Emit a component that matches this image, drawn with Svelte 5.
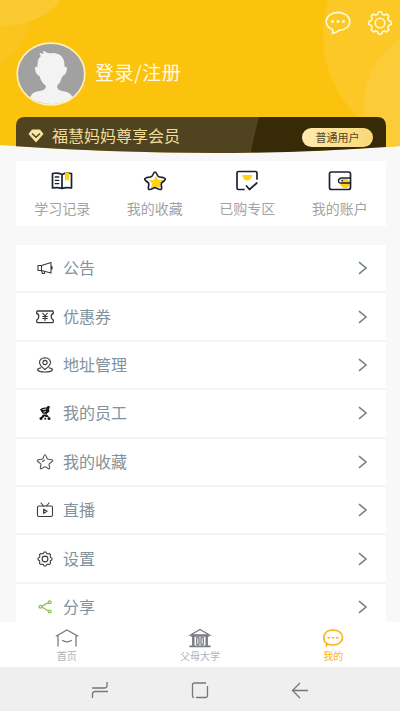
<script>
const shortcuts = [
  {icon: 'book', label: '学习记录'},
  {icon: 'favorite', label: '我的收藏'},
  {icon: 'bought', label: '已购专区'},
  {icon: 'wallet', label: '我的账户'},
]

const menu = [
  {icon: 'notice', label: '公告'},
  {icon: 'coupon', label: '优惠券'},
  {icon: 'address', label: '地址管理'},
  {icon: 'staff', label: '我的员工'},
  {icon: 'star', label: '我的收藏'},
  {icon: 'live', label: '直播'},
  {icon: 'settings', label: '设置'},
  {icon: 'share', label: '分享'},
]

const tabs = [
  {icon: 'home', label: '首页'},
  {icon: 'college', label: '父母大学'},
  {icon: 'mine', label: '我的'},
]

let active = $state('mine');

// wavy outline shared by the two gears
function gear(cx, cy, r, amp) {
  let d = '';
  for (let i = 0; i < 96; i++) {
    const a = (i / 96) * Math.PI * 2;
    const w = Math.max(-1, Math.min(1, Math.cos(a * 8) * 1.8));
    const rr = r + amp * w;
    d += `${i ? 'L' : 'M'}${(cx + rr * Math.cos(a)).toFixed(2)} ${(cy + rr * Math.sin(a)).toFixed(2)}`;
  }
  return d + 'Z';
}
</script>

<div class="app">
  <header>
    <svg class="backdrop" viewBox="0 0 400 160">
      <path fill="#fbc30e" d="M0 0H400V146Q200 160 0 145Z"/>
      <path fill="#fbc51f" d="M0 0H33Q32 45 0 65Z"/>
      <path fill="#fbca30" d="M0 0H61Q42 25 0 26Z"/>
      <path fill="#fbc826" d="M328 0Q310 68 359 119L386 146.800L400 146V0Z"/>
      <path fill="#fbcc38" d="M400 38Q360 66 364 119L386 146.800L400 146Z"/>
      <path fill="#50431f" d="M16 146.200V126Q16 117 25 117H260L250 152.700Q130 154 16 146.200Z"/>
      <path fill="#372a06" d="M259 117H377Q386 117 386 126V146.900Q320 151.500 250 152.700Z"/>
    </svg>
    <div class="actions">
      <svg class="chat" viewBox="0 0 26 24" fill="none" stroke="#fff9d8" stroke-width="1.600">
        <path d="M7.500 18.500C3.500 17 1.200 14 1.200 10.500C1.200 5.500 6.200 1.400 13 1.400S24.800 5.500 24.800 10.500S20 19.200 14 19.400Q11 22 7.500 22.500Q8.500 20.500 7.500 18.500Z"/>
        <path d="M6.200 10.500h2.800M11.600 10.500h2.800M17 10.500h2.800" stroke-width="2.700"/>
      </svg>
      <svg class="gear" viewBox="0 0 26 24" fill="none" stroke="#fff9d8" stroke-width="1.600">
        <path d={gear(13, 12, 10.1, 1.1)}/>
        <circle cx="13" cy="12" r="4.800"/>
      </svg>
    </div>
    <div class="user">
      <svg class="avatar" viewBox="0 0 70 64">
        <ellipse cx="35" cy="32" rx="33.800" ry="30.800" fill="#a1a1a2"/>
        <path fill="#f3f3f4" d="M14 56Q15 50 24 49Q30 48 30 44Q25 40 23.500 34Q19 32 19 26Q19 24 21.500 25Q21 17 25 14Q23 12 24 11L28 12Q26 9 28 9Q31 12 38 11Q49 12 48.500 25Q51 24 51 27Q50 33 46.500 34Q45 40 41 44Q41 48 46 49Q55 50 57 56Q36 68 14 56Z"/>
        <ellipse cx="35" cy="32" rx="33.800" ry="30.800" fill="none" stroke="#fff0b5" stroke-width="1.700"/>
      </svg>
      <span>登录/注册</span>
    </div>
    <div class="vip">
      <svg class="gem" viewBox="0 0 16 14">
        <path fill="#f8e4a4" d="M4 .5H12L15.500 5L8 13.500L.5 5Z"/>
        <path fill="none" stroke="#50431f" stroke-width="1.400" d="M4 4.500L8 8.300L12 4.500"/>
      </svg>
      <span class="title">福慧妈妈尊享会员</span>
      <span class="level">普通用户</span>
    </div>
  </header>

  <main>
    <section class="shortcuts">
      {#each shortcuts as item}
      <div class="shortcut">
        <svg viewBox="0 0 24 22" fill="none" stroke="#1c2032" stroke-width="1.700" stroke-linejoin="round" stroke-linecap="round">
          {#if item.icon === 'book'}
          <path d="M12 4.500Q8 2.500 2.500 3.500V18Q8 17 12 18.500Q16 17 21.500 18V3.500Q16 2.500 12 4.500V18.500"/>
          <path stroke-width="1.300" d="M5.200 7h3.600M5.200 10.300h3.600M5.200 13.600h3.600"/>
          <path fill="#fcd316" stroke="none" d="M15 2.500H19V11L17 9.500L15 11Z"/>
          {:else if item.icon === 'favorite'}
          <path fill="#fcd316" stroke="none" d="M13 6L15 9.500L20 10L17 13.500L17.500 18L13 16.500L8 18L9 13.500L6 10.500L11 9.700Z"/>
          <path d="M12 2Q13 2 14 4.500Q15 6.800 16.500 7L20.500 7.700Q23.500 8.500 21.500 10.500L18.500 13Q17.800 14 18.500 16.500Q19.500 20.500 16 19.200L12 17.500L8 19.200Q4.500 20.500 5.500 16.500Q6.200 14 5.500 13L2.500 10.500Q.5 8.500 3.500 7.700L7.500 7Q9 6.800 10 4.500Q11 2 12 2Z"/>
          {:else if item.icon === 'bought'}
          <path fill="#fcd316" stroke="none" d="M7 5H17.500Q16 10.500 12.300 10.500T7 5Z"/>
          <path d="M22 9V3Q22 1.500 20.500 1.500H3.500Q2 1.500 2 3V18Q2 19.500 3.500 19.500H9M11.500 16L14.500 19.500L21.800 13"/>
          {:else}
          <circle cx="17" cy="13.500" r="4.700" fill="#fcd316" stroke="none"/>
          <rect x="1.500" y="2" width="21" height="17.500" rx="2"/>
          <path stroke-width="1.400" d="M22.500 8H13.500Q10.500 8.500 10.500 11T13.500 13H22.500M14 10.500H14.500"/>
          {/if}
        </svg>
        <span>{item.label}</span>
      </div>
      {/each}
    </section>

    <section class="menu">
      {#each menu as item}
      <div class="row">
        <svg class="icon" viewBox="0 0 18 16" fill="none" stroke="#3a3a3a" stroke-width="1.100" stroke-linejoin="round" stroke-linecap="round">
          {#if item.icon === 'notice'}
          <path d="M2 5.500H5.500V10.500H2ZM5.500 5.500L15 2.500V13L5.500 10.500M5.500 11L6.500 13.500H8.500V11.500M16 6.500V9"/>
          {:else if item.icon === 'coupon'}
          <path stroke-width="1.300" d="M1.500 2H16.500Q17.500 2 17.300 4.500Q15.200 5 15.200 7.500T17.300 11Q17.500 13.700 16.500 13.700H1.500Q.5 13.700 .7 11Q2.800 10 2.800 7.500T.7 4.500Q.5 2 1.500 2Z"/>
          <path d="M6.800 4.300L9 7L11.200 4.300M9 7V11.500M6.700 7.500H11.300M6.700 9.500H11.300"/>
          {:else if item.icon === 'address'}
          <path d="M9 12.500Q3.500 8.500 3.500 5.300Q3.800 1 9 .7Q14.200 1 14.500 5.300Q14.500 8.500 9 12.500Z"/>
          <circle cx="9" cy="5.500" r="2.100"/>
          <path d="M5 10.700Q1.500 11.500 1.500 12.700Q2.500 15 9 15T16.500 12.700Q16.500 11.500 13 10.700"/>
          {:else if item.icon === 'staff'}
          <g fill="#171717" stroke="none">
            <path d="M4 4.500Q6 2 10.500 2.500L12 .8L14 1.500L13 4.500L13.500 6.500L10.500 9L6.500 8.500Z"/>
            <path d="M7 9.500H11L13 12H10L8.500 11.300L7 13H4.500Z"/>
            <circle cx="5" cy="13.500" r="1.500"/>
            <circle cx="9.200" cy="13.800" r="1"/>
            <circle cx="13" cy="13.500" r="1.500"/>
          </g>
          <path stroke="#ddd" stroke-width="1" d="M7 4.600L10 4M8 7L9.500 6.500"/>
          {:else if item.icon === 'star'}
          <path stroke="#555" d="M9 .8Q9.800 .8 11.300 5L16 5.800Q17.500 6.200 16 7.500L13 10.200L13.700 14Q13.600 15.400 12.200 14.500L9 12.600L5.800 14.500Q4.400 15.400 4.300 14L5 10.200L2 7.500Q.5 6.200 2 5.800L6.700 5Q8.200 .8 9 .8ZM6.500 7.500L8.500 6.200"/>
          {:else if item.icon === 'live'}
          <rect x="1.500" y="4" width="15" height="10.500" rx="1.500"/>
          <path d="M5 1L7.500 4M13 1L10.500 4"/>
          <path stroke-width="1.300" d="M7.700 7.300L11 9.300L7.700 11.300Z"/>
          {:else if item.icon === 'settings'}
          <path d={gear(9, 8, 6.4, 0.6)}/>
          <circle cx="9" cy="8" r="2.900"/>
          {:else}
          <g stroke="#8dc153" stroke-width="1.300">
            <path d="M12.500 3.700L5 7.500L12.500 12"/>
            <circle cx="4.500" cy="7.700" r="1.400" fill="#fff"/>
            <circle cx="13.700" cy="3.200" r="1.400" fill="#fff"/>
            <circle cx="13.700" cy="12.500" r="1.400" fill="#fff"/>
          </g>
          {/if}
        </svg>
        <span>{item.label}</span>
        <svg class="arrow" viewBox="0 0 10 14" fill="none" stroke="#71828c" stroke-width="1.600">
          <path d="M1 1.200L8 7L1 12.800"/>
        </svg>
      </div>
      {/each}
    </section>
  </main>

  <nav class="tabs">
    {#each tabs as tab}
    <button class="tab" class:active={tab.icon === active} onclick={() => active = tab.icon}>
      <svg viewBox="0 0 24 20" fill="none" stroke="currentColor" stroke-width="1.300">
        {#if tab.icon === 'home'}
        <path d="M.8 8.300L12 2L23.200 8.300M3 7V18.500M21 7V18.500M7.200 12.300Q12 15.500 16.800 12.300"/>
        {:else if tab.icon === 'college'}
        <path d="M2.500 7L12 1.500L21.500 7Z"/>
        <path stroke-width="1.700" d="M3 8H21M1.500 18.300H22.500"/>
        <path stroke-width="2.400" d="M5.300 8V18M18.700 8V18"/>
        <rect x="8.700" y="9.300" width="2.300" height="7.500" rx="1"/>
        <rect x="13" y="9.300" width="2.300" height="7.500" rx="1"/>
        {:else}
        <path stroke-width="1.600" d="M4.500 14.500C1 10 3 2 12 2C17.500 2 21.500 5 21.500 9.500S17.500 17 12 17Q8 17 6.500 16L5.500 17.500V14"/>
        <path stroke-width="1.500" d="M6.500 9.800h2.500M10.700 9.800h2.500M15 9.800h2.500"/>
        {/if}
      </svg>
      <span>{tab.label}</span>
    </button>
    {/each}
  </nav>

  <footer>
    <svg viewBox="0 0 18 18"><path d="M1 7H13.500Q16 7 16 4.500V1M17 10.500H4Q1.500 10.500 1.500 13V17"/></svg>
    <svg viewBox="0 0 18 18"><path d="M3 16.500Q1.500 16.500 1.500 15V4Q1.500 2 3.500 2H15M16.500 5V14Q16.500 16.500 14.500 16.500H5"/></svg>
    <svg viewBox="0 0 18 18"><path d="M17 9.500H1.500M9 2L1.500 9.500L9 17"/></svg>
  </footer>
</div>

<style>
:global(body) {
  margin: 0;
}
.app {
  width: 400px;
  height: 711px;
  display: flex;
  flex-direction: column;
  overflow: hidden;
  background: #f8f8f8;
  font-family: "Noto Sans CJK SC", sans-serif;
}
svg {
  display: block;
  flex: none;
}
header {
  position: relative;
  height: 161px;
  flex: none;
}
.backdrop {
  position: absolute;
  top: 0;
  left: 0;
  width: 400px;
  height: 160px;
}
.actions {
  position: relative;
  display: flex;
  justify-content: flex-end;
  gap: 16px;
  height: 42px;
  padding: 11px 7px 0 0;
  box-sizing: border-box;
}
.actions svg {
  width: 26px;
  height: 24px;
}
.user {
  position: relative;
  display: flex;
  align-items: center;
  height: 63px;
  padding-left: 16px;
  color: #fffbe4;
  font-size: 19px;
  letter-spacing: .6px;
}
.user span {
  margin-left: 9px;
  margin-top: -4px;
  white-space: nowrap;
}
.avatar {
  width: 70px;
  height: 64px;
}
.vip {
  position: relative;
  display: flex;
  align-items: center;
  height: 38px;
  margin: 12px 14px 0 16px;
  padding: 0 13px 0 12px;
}
.gem {
  width: 16px;
  height: 14px;
}
.title {
  margin-left: 8px;
  margin-top: -2px;
  color: #f3db99;
  font-size: 16px;
}
.level {
  width: 71px;
  height: 19px;
  margin-left: auto;
  margin-top: 2px;
  border-radius: 10px;
  background: linear-gradient(90deg, #ffeab0, #f8d877);
  color: #54451f;
  font-size: 11px;
  line-height: 18px;
  text-align: center;
}
main {
  flex: 1;
  min-height: 0;
  padding: 0 14px 0 16px;
  overflow: hidden;
}
.shortcuts {
  display: grid;
  grid-template-columns: repeat(4, 1fr);
  height: 65px;
  background: #fff;
}
.shortcut {
  display: flex;
  flex-direction: column;
  align-items: center;
  padding-top: 9px;
  color: #a3a3a3;
  font-size: 14px;
  line-height: 20px;
}
.shortcut svg {
  width: 24px;
  height: 22px;
  margin-bottom: 6px;
}
.menu {
  margin-top: 19px;
}
.row {
  display: flex;
  align-items: center;
  height: 48.400px;
  padding: 0 18px 0 20px;
  box-sizing: border-box;
  border-bottom: 2px solid #f4f4f4;
  background: #fff;
  color: #82929c;
  font-size: 16px;
}
.row span {
  margin-top: -2px;
}
.icon {
  width: 18px;
  height: 16px;
  margin-right: 9px;
}
.arrow {
  width: 10px;
  height: 14px;
  margin-left: auto;
}
.tabs {
  display: grid;
  grid-template-columns: repeat(3, 1fr);
  height: 45px;
  flex: none;
  background: #fff;
}
.tab {
  display: flex;
  flex-direction: column;
  align-items: center;
  justify-content: flex-start;
  padding: 6px 0 0;
  border: 0;
  background: none;
  color: #777a80;
  font-family: inherit;
  font-size: 10px;
  line-height: 15px;
}
.tab span {
  color: #b0b1b9;
}
.tab svg {
  width: 24px;
  height: 20px;
}
.tab.active,
.tab.active span {
  color: #fbb514;
}
footer {
  display: flex;
  justify-content: center;
  gap: 82px;
  height: 44px;
  flex: none;
  padding-top: 14px;
  box-sizing: border-box;
  background: #efefef;
}
footer svg {
  width: 18px;
  height: 18px;
  fill: none;
  stroke: #777;
  stroke-width: 1.300;
}
</style>
